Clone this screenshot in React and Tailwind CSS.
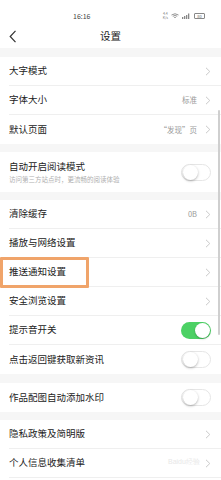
import React from "react";

const font = { fontFamily: '"Noto Sans CJK SC", "Noto Sans", sans-serif' };

function Chevron() {
  return (
    <svg width="6" height="9" viewBox="0 0 6 9" className="shrink-0">
      <path d="M1 0.8 L4.8 4.5 L1 8.2" fill="none" stroke="#c9c9c9" strokeWidth="1" />
    </svg>
  );
}

function Toggle({ on }) {
  return on ? (
    <div className="w-[30px] h-[17px] rounded-full bg-[#4cd164] flex items-center justify-end pr-[1px]">
      <div className="w-[15px] h-[15px] rounded-full bg-white shadow-[0_1px_2px_rgba(0,0,0,0.25)]" />
    </div>
  ) : (
    <div className="w-[30px] h-[17px] rounded-full bg-white border border-[#e6e6e6] flex items-center pl-[0.5px]">
      <div className="w-[15px] h-[15px] rounded-full bg-white shadow-[0_1px_2.5px_rgba(0,0,0,0.3)]" />
    </div>
  );
}

function Row({ label, value, toggle, on, last, chevron = true }) {
  return (
    <div className="h-[29px] pl-[9px] flex">
      <div className={`flex-1 flex items-center pr-[10px] ${last ? "" : "border-b border-[#efefef]"}`}>
        <span className="flex-1 text-[9.5px] text-[#222] leading-none">{label}</span>
        {value && <span className="text-[7.5px] text-[#9a9a9a] mr-[8px] leading-none">{value}</span>}
        {toggle ? <Toggle on={on} /> : chevron && <Chevron />}
      </div>
    </div>
  );
}

function Gap({ h = "h-[8px]" }) {
  return <div className={`${h} bg-[#f6f6f6]`} />;
}

export default function App() {
  return (
    <div className="relative w-[221px] h-[480px] bg-white overflow-hidden" style={font}>
      {/* status bar */}
      <div className="h-[24px] flex items-center pl-[73px] pr-[16px] pt-[8px]">
        <span className="text-[7px] text-[#444] leading-none">16:16</span>
        <div className="flex-1" />
        <div className="flex items-center gap-[3px] text-[#777]">
          <div className="flex flex-col text-[3.5px] leading-[4px] items-center">
            <span>4.4</span>
            <span>K/s</span>
          </div>
          <svg width="8" height="6" viewBox="0 0 8 6">
            <path d="M0.5 2 Q4 -0.5 7.5 2 M1.8 3.3 Q4 1.6 6.2 3.3 M3.2 4.6 Q4 4 4.8 4.6" fill="none" stroke="#777" strokeWidth="0.8" />
          </svg>
          <svg width="9" height="6" viewBox="0 0 9 6">
            <rect x="0" y="4" width="1.3" height="2" fill="#888" />
            <rect x="2" y="3" width="1.3" height="3" fill="#888" />
            <rect x="4" y="2" width="1.3" height="4" fill="#888" />
            <rect x="6" y="0.5" width="1.3" height="5.5" fill="#888" />
          </svg>
          <div className="w-[11px] h-[6px] border border-[#888] rounded-[1px] flex items-center justify-center text-[4px] leading-none text-[#666]">80</div>
        </div>
      </div>
      {/* nav bar */}
      <div className="h-[24px] flex items-center relative">
        <svg width="8" height="13" viewBox="0 0 8 13" className="ml-[9px]">
          <path d="M6.5 0.8 L1.2 6.5 L6.5 12.2" fill="none" stroke="#333" strokeWidth="1.2" />
        </svg>
        <span className="absolute left-0 right-0 text-center text-[10.5px] text-[#222] leading-none">设置</span>
      </div>
      <Gap h="h-[9px]" />
      <Row label="大字模式" />
      <Row label="字体大小" value="标准" />
      <Row label="默认页面" value="“发现”页" last />
      <Gap />
      <div className="h-[40px] pl-[9px] pr-[10px] flex items-center">
        <div className="flex-1 flex flex-col gap-[5px]">
          <span className="text-[9.5px] text-[#222] leading-none">自动开启阅读模式</span>
          <span className="text-[6.5px] text-[#b0b0b0] leading-none">访问第三方站点时，更流畅的阅读体验</span>
        </div>
        <Toggle on={false} />
      </div>
      <Gap />
      <Row label="清除缓存" value="0B" />
      <Row label="播放与网络设置" />
      <Row label="推送通知设置" />
      <Row label="安全浏览设置" />
      <Row label="提示音开关" toggle on />
      <Row label="点击返回键获取新资讯" toggle on={false} last />
      <Gap h="h-[9px]" />
      <Row label="作品配图自动添加水印" toggle on={false} last />
      <Gap />
      <Row label="隐私政策及简明版" />
      <Row label="个人信息收集清单" />

      {/* scrollbar */}
      <div className="absolute left-[218px] top-[110px] w-[2px] h-[225px] bg-[#cfcfcf] rounded-full" />
      {/* orange highlight */}
      <div className="absolute left-0 top-[257px] w-[89px] h-[31px] border-[3px] border-[#f0a46a] rounded-[1px]" />
      {/* watermark */}
      <div className="absolute left-[168px] top-[458px] text-[7px] text-[#e8e8e8] leading-none" style={{ fontFamily: '"Liberation Sans", sans-serif' }}>
        Baidu经验
      </div>
    </div>
  );
}
